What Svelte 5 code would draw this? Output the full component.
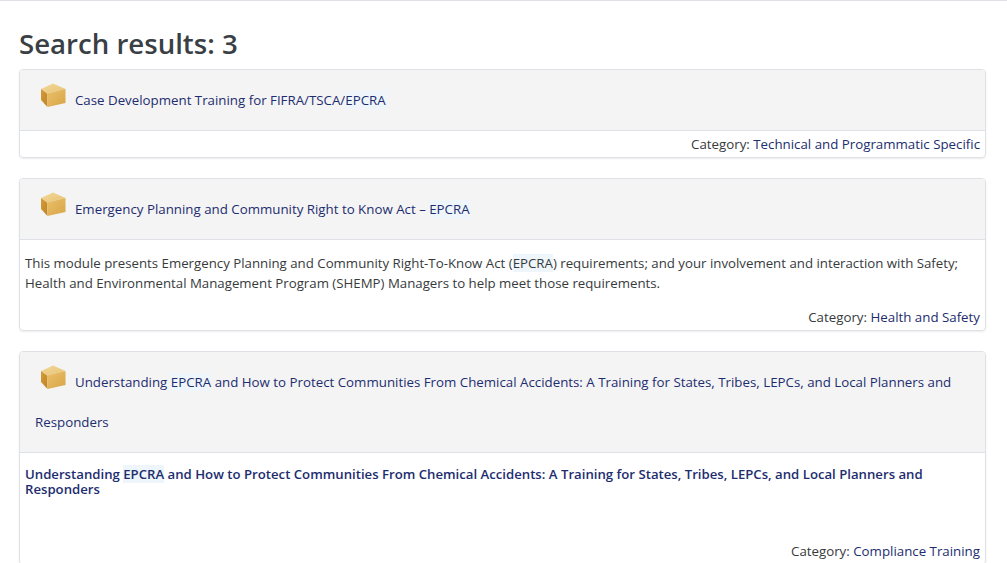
<script>
  const results = [
    { title: 'Case Development Training for FIFRA/TSCA/EPCRA', category: 'Technical and Programmatic Specific' },
    { title: 'Emergency Planning and Community Right to Know Act – EPCRA', category: 'Health and Safety', summary: 'plain' },
    { title: 'Understanding EPCRA and How to Protect Communities From Chemical Accidents: A Training for States, Tribes, LEPCs, and Local Planners and Responders', category: 'Compliance Training', summary: 'bold' }
  ];
</script>

{#snippet box()}
  <svg class="box" width="26" height="25" viewBox="0 0 26 25" aria-hidden="true">
    <defs>
      <linearGradient id="t" x1="0" y1="0" x2="1" y2="1"><stop offset="0" stop-color="#f2d89a"/><stop offset="1" stop-color="#e8c272"/></linearGradient>
      <linearGradient id="l" x1="0" y1="0" x2="1" y2="1"><stop offset="0" stop-color="#d69c3a"/><stop offset="1" stop-color="#bd8426"/></linearGradient>
      <linearGradient id="r" x1="0" y1="0" x2="1" y2="1"><stop offset="0" stop-color="#eac06a"/><stop offset="1" stop-color="#d9a548"/></linearGradient>
    </defs>
    <path d="M1 6 L13 0.5 L25.5 6 L7 10.5 Z" fill="url(#t)"/>
    <path d="M1 6 L7 10.5 L7.5 24 L1 17 Z" fill="url(#l)"/>
    <path d="M7 10.5 L25.5 6 L25.5 20 L7.5 24 Z" fill="url(#r)"/>
  </svg>
{/snippet}

{#snippet hl(text)}
  {#each text.split(/(EPCRA)/) as part}{#if part === 'EPCRA'}<span class="hl">EPCRA</span>{:else}{part}{/if}{/each}
{/snippet}

<main class="page">
  <h2>Search results: 3</h2>
  {#each results as r}
    <article class="card">
      <header class="head">
        {@render box()}
        <a href="#top" class="link">{@render hl(r.title)}</a>
      </header>
      <div class="body">
        {#if r.summary === 'plain'}
          <p class="summary">This module presents Emergency Planning and Community Right-To-Know Act ({@render hl('EPCRA')}) requirements; and your involvement and interaction with Safety; Health and Environmental Management Program (SHEMP) Managers to help meet those requirements.</p>
        {:else if r.summary === 'bold'}
          <p class="summary strong">{@render hl(r.title)}</p>
        {/if}
        <div class="cat">Category: <a href="#top" class="catlink">{r.category}</a></div>
      </div>
    </article>
  {/each}
</main>

<style>
  :global(body) {
    margin: 0;
    background: #fff;
    overflow: hidden;
    font-family: "Open Sans", "Noto Sans", sans-serif;
    color: #373a3c;
  }
  .page {
    border-top: 1px solid #dee2e6;
    padding: 0 21px 0 19px;
    height: 562px;
    overflow: hidden;
  }
  h2 {
    margin: 0;
    padding-top: 24px;
    height: 44px;
    font-size: 27.6px;
    line-height: 36px;
    font-weight: 600;
    color: #3a3f45;
  }
  .card {
    border: 1px solid #dee2e6;
    border-radius: 4px;
    box-shadow: 0 1px 2px rgba(0,0,0,.08);
    margin-bottom: 20px;
    overflow: hidden;
    font-size: 13.3px;
  }
  .head {
    background: #f4f4f5;
    border-bottom: 1px solid #dee2e6;
    padding: 10px 15px;
    line-height: 40px;
  }
  .box { margin: 0 5.5px 0 5px; vertical-align: -3px; }
  .link, .catlink { color: #1d2d6f; text-decoration: none; }
  .hl { background: #eef6fb; }
  .body { padding: 0 5px; }
  .summary {
    margin: 0;
    padding-top: 13px;
    line-height: 20px;
    min-height: 51px;
    font-size: 13.25px;
  }
  .strong {
    color: #1d2d6f;
    font-weight: 600;
    font-size: 13.18px;
    line-height: 15px;
    padding-top: 14px;
    min-height: 71px;
  }
  .cat {
    text-align: right;
    line-height: 26px;
  }
</style>
